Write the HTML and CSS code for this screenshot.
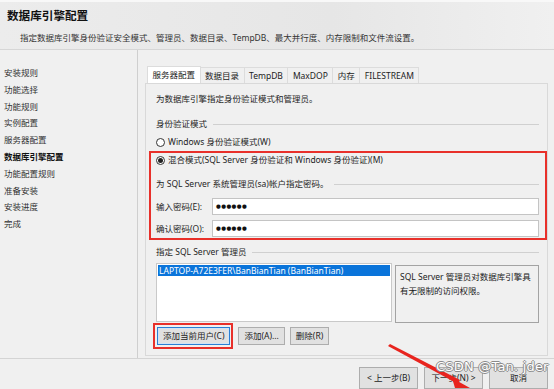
FILE: index.html
```html
<!DOCTYPE html>
<html lang="zh-CN">
<head>
    <meta charset="UTF-8">
    <meta name="viewport" content="width=device-width, initial-scale=1.0">
    <title>数据库引擎配置</title>
    <link rel="stylesheet" href="styles.css">
</head>
<body>
    <div class="window">
        <div class="header">
            <h1 class="title">数据库引擎配置</h1>
            <p class="subtitle">指定数据库引擎身份验证安全模式、管理员、数据目录、TempDB、最大并行度、内存限制和文件流设置。</p>
        </div>

        <div class="main">
            <ul class="nav">
                <li>安装规则</li>
                <li>功能选择</li>
                <li>功能规则</li>
                <li>实例配置</li>
                <li>服务器配置</li>
                <li class="current">数据库引擎配置</li>
                <li>功能配置规则</li>
                <li>准备安装</li>
                <li>安装进度</li>
                <li>完成</li>
            </ul>

            <div class="content">
                <div class="tabs">
                    <span class="tab active">服务器配置</span>
                    <span class="tab">数据目录</span>
                    <span class="tab">TempDB</span>
                    <span class="tab">MaxDOP</span>
                    <span class="tab">内存</span>
                    <span class="tab">FILESTREAM</span>
                </div>
                <div class="panel">
                    <p class="line">为数据库引擎指定身份验证模式和管理员。</p>

                    <div class="group-label first"><span>身份验证模式</span></div>
                    <div class="radio-row"><span class="radio"></span>Windows 身份验证模式(W)</div>

                    <div class="mark-box">
                        <div class="radio-row"><span class="radio checked"></span>混合模式(SQL Server 身份验证和 Windows 身份验证)(M)</div>
                        <div class="group-label sa"><span>为 SQL Server 系统管理员(sa)帐户指定密码。</span></div>
                        <div class="field">
                            <label>输入密码(E):</label>
                            <div class="input">●●●●●●</div>
                        </div>
                        <div class="field second">
                            <label>确认密码(O):</label>
                            <div class="input">●●●●●●</div>
                        </div>
                    </div>

                    <div class="group-label admins"><span>指定 SQL Server 管理员</span></div>
                    <div class="admin-area">
                        <div class="listbox">
                            <div class="list-item selected">LAPTOP-A72E3FER\BanBianTian (BanBianTian)</div>
                        </div>
                        <div class="hint">SQL Server 管理员对数据库引擎具有无限制的访问权限。</div>
                    </div>

                    <div class="btn-row">
                        <span class="mark-btn"><button class="btn focus">添加当前用户(C)</button></span>
                        <button class="btn">添加(A)...</button>
                        <button class="btn">删除(R)</button>
                    </div>
                </div>
            </div>
        </div>

        <div class="footer">
            <button class="btn wide">&lt; 上一步(B)</button>
            <button class="btn wide">下一步(N) &gt;</button>
            <button class="btn wide">取消</button>
        </div>

        <!-- annotation arrow + watermark drawn over the screenshot -->
        <svg class="arrow" width="90" height="50" viewBox="0 0 90 50">
            <polygon points="2,5 4,3 74,39 72,43" fill="#e8241e"/>
            <polygon points="66,37 84,47 69,47" fill="#e8241e"/>
        </svg>
        <div class="watermark">CSDN @Tan. jder</div>
    </div>
</body>
</html>
```

FILE: styles.css
```css
*{
    box-sizing: border-box;
}
body{
    margin: 0;
    background-color: #f0f0f0;
    font-family: "Noto Sans", "Noto Sans CJK SC", sans-serif;
    font-size: 8.5px;
    color: #1e1e1e;
}
.window{
    position: relative;
    width: 554px;
    height: 389px;
    overflow: hidden;
    display: flex;
    flex-direction: column;
}

/* header */
.header{
    height: 51px;
    padding: 6px 7px 0;
    background: linear-gradient(90deg, #ececec, #e6e6e6 60%, #f0f0f0);
    border-top: 2px solid #f8f8f8;
    border-bottom: 1px solid #d6d6d6;
}
.title{
    margin: 0;
    font-size: 11.6px;
    line-height: 16px;
    font-weight: bold;
    color: #111;
}
.subtitle{
    margin: 8px 0 0 13px;
    line-height: 12px;
    color: #333;
}

/* left navigation */
.main{
    display: flex;
    height: 316px;
    border-bottom: 1px solid #d4d4d4;
}
.nav{
    list-style: none;
    margin: 0;
    padding: 15px 0 0 4px;
    width: 138px;
    border-right: 1px solid #cfcfcf;
}
.nav li{
    line-height: 16.8px;
    color: #333;
}
.nav li.current{
    font-weight: bold;
    color: #111;
}

/* tabs */
.content{
    padding: 17px 6px 0 7px;
    flex: 1;
}
.tabs{
    display: flex;
    height: 16px;
    padding-left: 2px;
}
.tab{
    line-height: 15px;
    padding: 0 4.5px;
    border: 1px solid #dcdcdc;
    border-bottom: none;
    margin-right: -1px;
    background: #f0f0f0;
    color: #222;
}
.tab.active{
    background: #fff;
    position: relative;
    z-index: 1;
    margin-top: -1px;
    line-height: 16px;
}
.panel{
    border: 1px solid #d9d9d9;
    padding: 9px 8px 7px 10px;
    height: 273px;
}
.line{
    margin: 0;
    line-height: 12px;
}

.group-label{
    display: flex;
    align-items: center;
    line-height: 12px;
}
.group-label::after{
    content: '';
    flex: 1;
    border-top: 1px solid #d0d0d0;
    margin-left: 6px;
}
.group-label.first{
    margin-top: 13px;
}
.group-label.sa{
    margin-top: 12px;
}
.group-label.admins{
    margin-top: 6px;
}

.radio-row{
    display: flex;
    align-items: center;
    line-height: 12px;
    margin-top: 6px;
}
.radio{
    width: 9px;
    height: 9px;
    border: 1px solid #333;
    border-radius: 50%;
    margin-right: 3px;
    background: #fff;
    display: flex;
    align-items: center;
    justify-content: center;
}
.radio.checked::after{
    content: '';
    width: 5px;
    height: 5px;
    border-radius: 50%;
    background: #222;
}

/* red annotation box */
.mark-box{
    margin: 3px -8px 0 -7px;
    border: 2px solid #e8302a;
    padding: 1px 6px 1px 5px;
}
.mark-box .radio-row{
    margin-top: 0;
}

.field{
    display: flex;
    align-items: center;
    margin-top: 8px;
}
.field.second{
    margin-top: 5px;
}
.field label{
    width: 56px;
    line-height: 12px;
}
.input{
    flex: 1;
    height: 17px;
    background: #fff;
    border: 1px solid #c4c4c4;
    padding-left: 3px;
    font-family: "DejaVu Sans", sans-serif;
    font-size: 5.5px;
    line-height: 15px;
    letter-spacing: 0.4px;
    color: #111;
}

/* administrators */
.admin-area{
    display: flex;
    align-items: flex-start;
    margin-top: 5px;
}
.listbox{
    width: 236px;
    height: 59px;
    background: #fff;
    border: 1px solid #c9c9c9;
    padding: 1px;
}
.list-item{
    line-height: 11px;
    padding-left: 1px;
}
.list-item.selected{
    background: #0a74da;
    color: #fff;
}
.hint{
    margin: 2px 0 0 3px;
    flex: 1;
    height: 58px;
    border: 1px solid #a3a3a3;
    padding: 4px 4px 0;
    line-height: 14px;
    color: #222;
}

.btn-row{
    display: flex;
    align-items: center;
    gap: 5px;
    margin-left: -3px;
}
.mark-btn{
    border: 2px solid #e8302a;
    padding: 2px 1px 2px 2px;
    display: flex;
}
.btn{
    font-family: inherit;
    font-size: 8.5px;
    height: 18px;
    padding: 0 5px;
    border: 1px solid #adadad;
    background: #e1e1e1;
    color: #222;
    line-height: 16px;
}
.btn.focus{
    border: 1px solid #2a7fd4;
    box-shadow: inset 0 0 0 1px #cfe3f7;
}

/* bottom buttons */
.footer{
    display: flex;
    justify-content: flex-end;
    gap: 6px;
    padding: 8px 6px 0 0;
}
.btn.wide{
    width: 59px;
    height: 22px;
    padding: 0;
    line-height: 18px;
}

.arrow{
    position: absolute;
    left: 386px;
    top: 341px;
}
.watermark{
    position: absolute;
    left: 436px;
    top: 359px;
    font-family: "DejaVu Sans", sans-serif;
    font-size: 13px;
    line-height: 16px;
    color: #fff;
    text-shadow: 1px 0 0 #8a8a8a, -1px 0 0 #8a8a8a, 0 1px 0 #8a8a8a, 0 -1px 0 #8a8a8a;
    letter-spacing: 0.2px;
}
```
